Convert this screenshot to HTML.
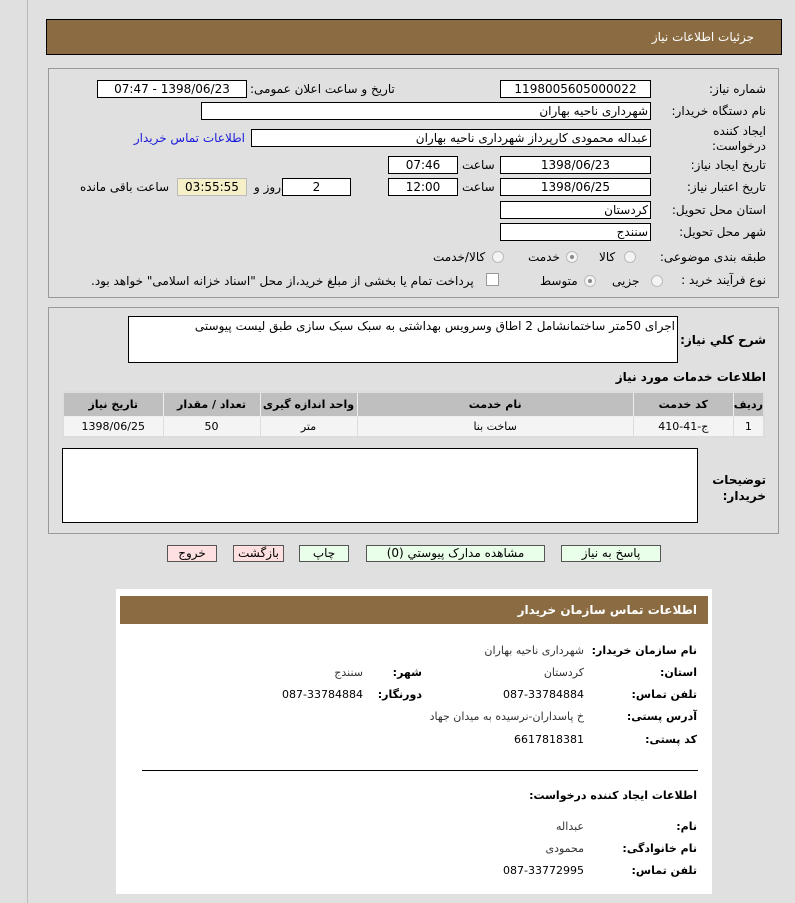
<!DOCTYPE html>
<html dir="rtl"><head><meta charset="utf-8"><style>
*{box-sizing:border-box;margin:0;padding:0}
body{width:795px;height:903px;background:#e0e0e0;font-family:Tahoma,"DejaVu Sans","Noto Sans CJK SC",sans-serif;font-size:12px;color:#000;position:relative;overflow:hidden}
.a{position:absolute;white-space:nowrap}
.box{position:absolute;background:#fff;border:1px solid #000;height:18px;line-height:16px;text-align:center;font-size:12px}
.r{text-align:right;padding-right:2px}
.b{font-weight:bold}
.btn{position:absolute;height:17px;border:1px solid #555;line-height:15px;text-align:center;font-size:12px;background:#eaffea}
.pk{background:#ffe0e0}
.rad{position:absolute;width:12px;height:12px;border-radius:50%;border:1px solid #bbb;background:#f4f4f4}
.rad.on::after{content:"";position:absolute;left:3px;top:3px;width:4px;height:4px;border-radius:50%;background:#888}
td,th{border:1px solid #ddd;text-align:center;font-size:11px}
th{border-color:#eee}
</style></head><body>
<div class="a" style="left:27px;top:0;width:1px;height:903px;background:#bbb"></div>
<div class="a" style="left:46px;top:19px;width:736px;height:36px;background:#8b6c42;border:1px solid #000"></div>
<div class="a" style="right:41px;top:30px;color:#fff;font-size:12px">جزئیات اطلاعات نیاز</div>

<div class="a" style="left:48px;top:68px;width:731px;height:230px;border:1px solid #999"></div>
<div class="a" style="right:29px;top:82px">شماره نیاز:</div>
<div class="box" style="left:500px;top:80px;width:151px">1198005605000022</div>
<div class="a" style="left:250px;top:82px">تاریخ و ساعت اعلان عمومی:</div>
<div class="box" style="left:97px;top:80px;width:150px">1398/06/23 - 07:47</div>

<div class="a" style="right:29px;top:104px">نام دستگاه خریدار:</div>
<div class="box r" style="left:201px;top:102px;width:450px">شهرداری ناحیه بهاران</div>

<div class="a" style="right:29px;top:124px;line-height:15px">ایجاد کننده<br>درخواست:</div>
<div class="box r" style="left:251px;top:129px;width:400px">عبداله محمودی کارپرداز شهرداری ناحیه بهاران</div>
<div class="a" style="right:550px;top:131px;color:#1a1adb">اطلاعات تماس خریدار</div>

<div class="a" style="right:29px;top:158px">تاریخ ایجاد نیاز:</div>
<div class="box" style="left:500px;top:156px;width:151px">1398/06/23</div>
<div class="a" style="left:462px;top:158px">ساعت</div>
<div class="box" style="left:388px;top:156px;width:70px">07:46</div>

<div class="a" style="right:29px;top:180px">تاریخ اعتبار نیاز:</div>
<div class="box" style="left:500px;top:178px;width:151px">1398/06/25</div>
<div class="a" style="left:462px;top:180px">ساعت</div>
<div class="box" style="left:388px;top:178px;width:70px">12:00</div>
<div class="box" style="left:282px;top:178px;width:69px">2</div>
<div class="a" style="left:254px;top:180px">روز و</div>
<div class="box" style="left:177px;top:178px;width:70px;background:#f5f0c8;border-color:#bbb">03:55:55</div>
<div class="a" style="left:80px;top:180px">ساعت باقی مانده</div>

<div class="a" style="right:29px;top:203px">استان محل تحویل:</div>
<div class="box r" style="left:500px;top:201px;width:151px">کردستان</div>
<div class="a" style="right:29px;top:225px">شهر محل تحویل:</div>
<div class="box r" style="left:500px;top:223px;width:151px">سنندج</div>

<div class="a" style="right:29px;top:250px">طبقه بندی موضوعی:</div>
<div class="rad" style="left:624px;top:251px"></div><div class="a" style="left:599px;top:250px">کالا</div>
<div class="rad on" style="left:566px;top:251px"></div><div class="a" style="left:528px;top:250px">خدمت</div>
<div class="rad" style="left:492px;top:251px"></div><div class="a" style="left:433px;top:250px">کالا/خدمت</div>

<div class="a" style="right:29px;top:273px">نوع فرآیند خرید :</div>
<div class="rad" style="left:651px;top:275px"></div><div class="a" style="left:612px;top:274px">جزیی</div>
<div class="rad on" style="left:584px;top:275px"></div><div class="a" style="left:540px;top:274px">متوسط</div>
<div class="a" style="left:486px;top:273px;width:13px;height:13px;background:#fff;border:1px solid #999"></div>
<div class="a" style="left:91px;top:274px">پرداخت تمام یا بخشی از مبلغ خرید،از محل "اسناد خزانه اسلامی" خواهد بود.</div>

<div class="a" style="left:48px;top:307px;width:731px;height:227px;border:1px solid #999"></div>
<div class="a" style="left:128px;top:316px;width:550px;height:47px;background:#fff;border:1px solid #000;padding:2px;text-align:right;white-space:normal">اجرای 50متر ساختمانشامل 2 اطاق وسرویس بهداشتی به سبک سبک سازی طبق لیست پیوستی</div>
<div class="a b" style="right:29px;top:333px;font-size:12px">شرح کلي نیاز:</div>
<div class="a b" style="right:29px;top:370px;font-size:12px">اطلاعات خدمات مورد نیاز</div>
<table class="a" style="left:62px;top:391px;width:703px;border-collapse:collapse;background:#eee;border:2px solid #ddd">
<tr style="background:#bfbfbf;height:24px"><th style="width:28px">ردیف</th><th style="width:100px">کد خدمت</th><th>نام خدمت</th><th style="width:97px">واحد اندازه گیری</th><th style="width:97px">تعداد / مقدار</th><th style="width:100px">تاریخ نیاز</th></tr>
<tr style="background:#f4f4f4;height:21px"><td>1</td><td>ج-41-410</td><td>ساخت بنا</td><td>متر</td><td>50</td><td>1398/06/25</td></tr>
</table>
<div class="a" style="left:62px;top:448px;width:636px;height:75px;background:#fff;border:1px solid #000"></div>
<div class="a b" style="right:29px;top:472px;font-size:12px;line-height:16px">توضیحات<br>خریدار:</div>

<div class="btn" style="left:561px;top:545px;width:100px">پاسخ به نیاز</div>
<div class="btn" style="left:366px;top:545px;width:179px">مشاهده مدارک پیوستي (0)</div>
<div class="btn" style="left:299px;top:545px;width:50px">چاپ</div>
<div class="btn pk" style="left:233px;top:545px;width:51px">بازگشت</div>
<div class="btn pk" style="left:167px;top:545px;width:50px">خروج</div>

<div class="a" style="left:116px;top:589px;width:596px;height:305px;background:#fff"></div>
<div class="a" style="left:120px;top:596px;width:588px;height:28px;background:#8b6c42"></div>
<div class="a b" style="right:98px;top:603px;color:#fff">اطلاعات تماس سازمان خریدار</div>
<div style="font-size:11px">
<div class="a b" style="right:98px;top:644px">نام سازمان خریدار:</div><div class="a" style="right:211px;top:644px;color:#333">شهرداری ناحیه بهاران</div>
<div class="a b" style="right:98px;top:666px">استان:</div><div class="a" style="right:211px;top:666px;color:#333">کردستان</div>
<div class="a b" style="right:373px;top:666px">شهر:</div><div class="a" style="right:432px;top:666px;color:#333">سنندج</div>
<div class="a b" style="right:98px;top:688px">تلفن تماس:</div><div class="a" style="right:211px;top:688px">087-33784884</div>
<div class="a b" style="right:373px;top:688px">دورنگار:</div><div class="a" style="right:432px;top:688px">087-33784884</div>
<div class="a b" style="right:98px;top:710px">آدرس پستی:</div><div class="a" style="right:211px;top:710px;color:#333">خ پاسداران-نرسیده به میدان جهاد</div>
<div class="a b" style="right:98px;top:733px">کد پستی:</div><div class="a" style="right:211px;top:733px">6617818381</div>
<div class="a" style="left:142px;top:770px;width:556px;height:1px;background:#000"></div>
<div class="a b" style="right:98px;top:789px">اطلاعات ایجاد کننده درخواست:</div>
<div class="a b" style="right:98px;top:820px">نام:</div><div class="a" style="right:211px;top:820px;color:#333">عبداله</div>
<div class="a b" style="right:98px;top:842px">نام خانوادگی:</div><div class="a" style="right:211px;top:842px;color:#333">محمودی</div>
<div class="a b" style="right:98px;top:864px">تلفن تماس:</div><div class="a" style="right:211px;top:864px">087-33772995</div>
</div>
</body></html>
